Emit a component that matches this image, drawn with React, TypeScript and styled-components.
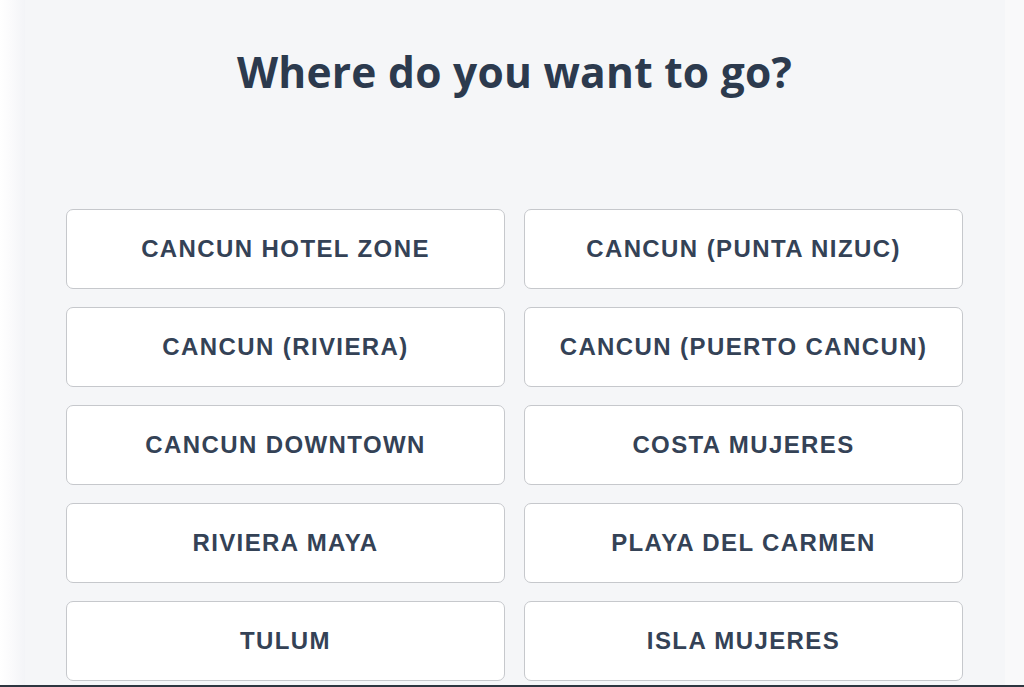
import React from "react";
import styled, { createGlobalStyle } from "styled-components";

const Global = createGlobalStyle`
  html, body { margin: 0; padding: 0; }
  body { background: #f5f6f8; font-family: "Liberation Sans", Arial, sans-serif; }
`;

const Viewport = styled.div`
  height: 687px;
  display: flex;
  flex-direction: column;
  overflow: hidden;
`;

const Stage = styled.div`
  flex: 1;
  display: flex;
  min-height: 0;
`;

const LeftEdge = styled.div`
  width: 25px;
  background: linear-gradient(to right, #ffffff 0%, #fbfbfc 40%, #f3f4f7 100%);
`;

const RightEdge = styled.div`
  width: 19px;
  background: #f9f9fa;
`;

const Main = styled.main`
  flex: 1;
  background: #f5f6f8;
  padding: 0 42px 0 41px;
  display: flex;
  flex-direction: column;
`;

const Title = styled.h1`
  margin: 42px 0 0;
  text-align: center;
  font-family: "Open Sans", "Noto Sans", sans-serif;
  font-weight: 700;
  font-size: 42.5px;
  line-height: 60px;
  color: #2c3a4e;
  letter-spacing: 0.25px;
`;

const Grid = styled.div`
  margin-top: 107px;
  display: grid;
  grid-template-columns: 1fr 1fr;
  column-gap: 19px;
  row-gap: 18px;
`;

const Option = styled.button`
  height: 80px;
  box-sizing: border-box;
  background: #ffffff;
  border: 1px solid #c6c8cc;
  border-radius: 7px;
  font-family: "Liberation Sans", Arial, sans-serif;
  font-weight: 700;
  font-size: 24px;
  letter-spacing: 1.4px;
  color: #344256;
  text-transform: uppercase;
  cursor: pointer;
  padding: 0;
`;

const BottomBar = styled.div`
  height: 2px;
  background: #2e3640;
`;

const places = [
  "Cancun Hotel Zone",
  "Cancun (Punta Nizuc)",
  "Cancun (Riviera)",
  "Cancun (Puerto Cancun)",
  "Cancun Downtown",
  "Costa Mujeres",
  "Riviera Maya",
  "Playa del Carmen",
  "Tulum",
  "Isla Mujeres",
];

export default function App() {
  return (
    <Viewport>
      <Global />
      <Stage>
        <LeftEdge />
        <Main>
          <Title>Where do you want to go?</Title>
          <Grid>
            {places.map((p) => (
              <Option key={p}>{p}</Option>
            ))}
          </Grid>
        </Main>
        <RightEdge />
      </Stage>
      <BottomBar />
    </Viewport>
  );
}
